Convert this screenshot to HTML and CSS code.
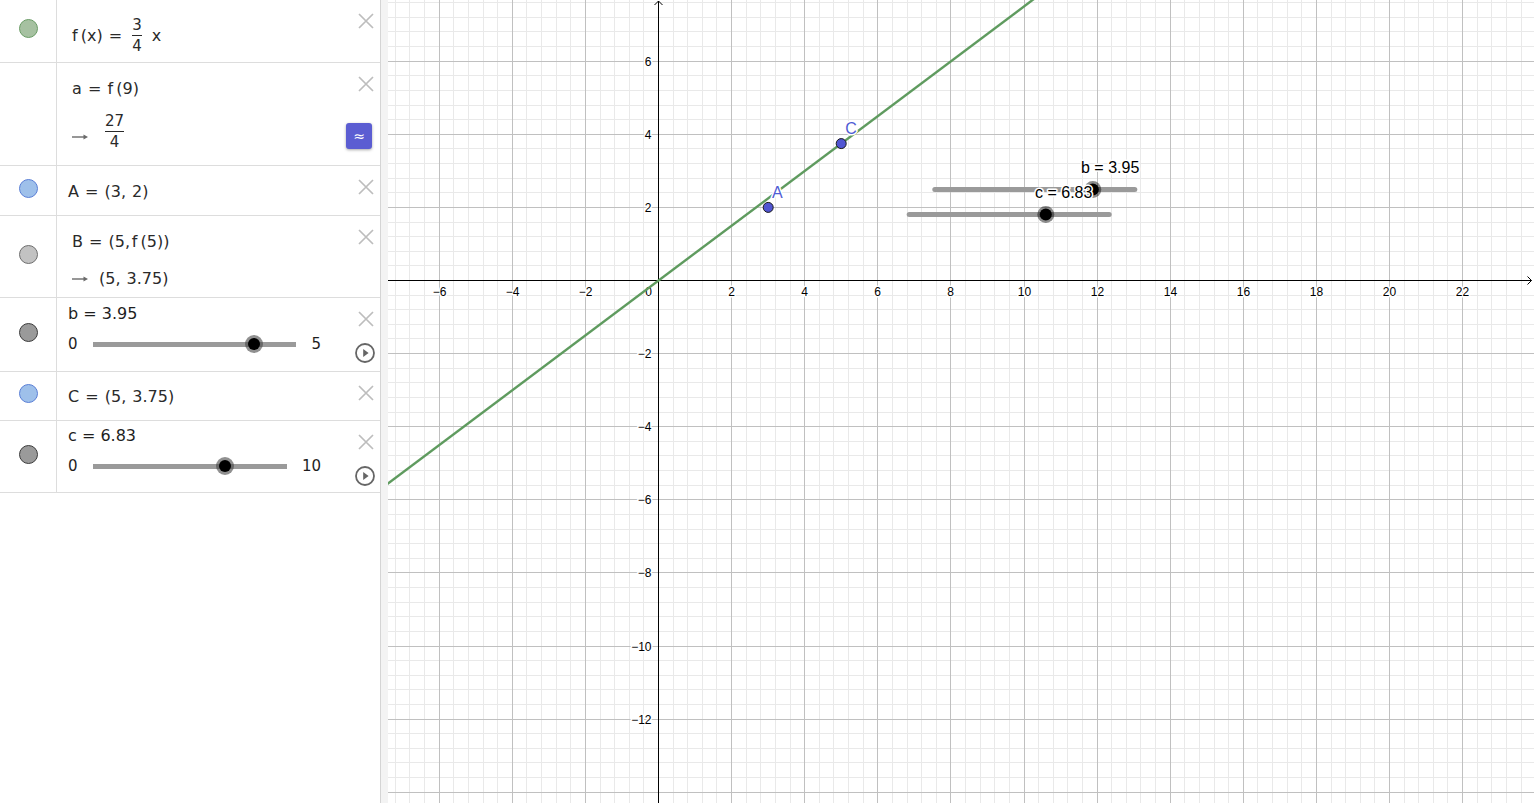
FILE: index.html
```html
<!DOCTYPE html>
<html lang="en">
<head>
<meta charset="utf-8">
<title>GeoGebra</title>
<link rel="stylesheet" href="styles.css">
</head>
<body>
<div class="app">
  <aside class="algebra">
    <div class="row r1">
      <div class="marker-col"><span class="marker m-fn"></span></div>
      <div class="content">
        <div class="mline ind">
          <span class="t">f&#8201;(x) =</span>
          <span class="frac g-frac1"><span class="num">3</span><span class="den">4</span></span>
          <span class="t g-x">x</span>
        </div>
      </div>
      <div class="controls">
        <svg class="close" viewBox="0 0 16 16"><path d="M1 1 L15 15 M15 1 L1 15"/></svg>
      </div>
    </div>

    <div class="row r2">
      <div class="marker-col"></div>
      <div class="content">
        <div class="line ind">a = f&#8201;(9)</div>
        <div class="mline ind r2l2">
          <svg class="arrow arrow-low" viewBox="0 0 16 8"><path class="shaft" d="M0 4 H13"/><path class="head" d="M11.5 1.6 L16 4 L11.5 6.4 Z"/></svg>
          <span class="frac g-frac2"><span class="num">27</span><span class="den">4</span></span>
        </div>
      </div>
      <div class="controls">
        <svg class="close" viewBox="0 0 16 16"><path d="M1 1 L15 15 M15 1 L1 15"/></svg>
        <div class="approx">&#8776;</div>
      </div>
    </div>

    <div class="row r3">
      <div class="marker-col"><span class="marker m-pt"></span></div>
      <div class="content">
        <div class="line">A = (3, 2)</div>
      </div>
      <div class="controls">
        <svg class="close" viewBox="0 0 16 16"><path d="M1 1 L15 15 M15 1 L1 15"/></svg>
      </div>
    </div>

    <div class="row r4">
      <div class="marker-col"><span class="marker m-dep"></span></div>
      <div class="content">
        <div class="line ind">B = (5,&#8202;f&#8201;(5))</div>
        <div class="line ind r4l2">
          <svg class="arrow" viewBox="0 0 16 8"><path class="shaft" d="M0 4 H13"/><path class="head" d="M11.5 1.6 L16 4 L11.5 6.4 Z"/></svg>
          <span class="t g-val">(5, 3.75)</span>
        </div>
      </div>
      <div class="controls">
        <svg class="close" viewBox="0 0 16 16"><path d="M1 1 L15 15 M15 1 L1 15"/></svg>
      </div>
    </div>

    <div class="row r5">
      <div class="marker-col"><span class="marker m-num"></span></div>
      <div class="content">
        <div class="line title">b = 3.95</div>
        <div class="slider">
          <span class="lim">0</span>
          <div class="track"><span class="knob" style="left: 79%"></span></div>
          <span class="lim">5</span>
        </div>
      </div>
      <div class="controls">
        <svg class="close" viewBox="0 0 16 16"><path d="M1 1 L15 15 M15 1 L1 15"/></svg>
        <svg class="play" viewBox="0 0 20 20"><circle cx="10" cy="10" r="9"/><path d="M8.2 6 L13.6 10 L8.2 14 Z"/></svg>
      </div>
    </div>

    <div class="row r6">
      <div class="marker-col"><span class="marker m-pt"></span></div>
      <div class="content">
        <div class="line">C = (5, 3.75)</div>
      </div>
      <div class="controls">
        <svg class="close" viewBox="0 0 16 16"><path d="M1 1 L15 15 M15 1 L1 15"/></svg>
      </div>
    </div>

    <div class="row r7">
      <div class="marker-col"><span class="marker m-num"></span></div>
      <div class="content">
        <div class="line title">c = 6.83</div>
        <div class="slider">
          <span class="lim">0</span>
          <div class="track"><span class="knob" style="left: 68.3%"></span></div>
          <span class="lim">10</span>
        </div>
      </div>
      <div class="controls">
        <svg class="close" viewBox="0 0 16 16"><path d="M1 1 L15 15 M15 1 L1 15"/></svg>
        <svg class="play" viewBox="0 0 20 20"><circle cx="10" cy="10" r="9"/><path d="M8.2 6 L13.6 10 L8.2 14 Z"/></svg>
      </div>
    </div>
  </aside>

  <div class="divider"></div>

  <main class="graphics">
    <svg class="canvas" width="1146" height="803" viewBox="0 0 1146 803">
      <g id="grid-minor" class="grid-minor"></g>
      <g id="grid-major" class="grid-major"></g>
      <g class="axes">
        <line x1="0" y1="280.5" x2="1143.5" y2="280.5"/>
        <polyline points="1139.5,276.5 1143.5,280.5 1139.5,284.5"/>
        <line x1="270.5" y1="1" x2="270.5" y2="803"/>
        <polyline points="266.5,5 270.5,1 274.5,5"/>
      </g>
      <g id="axis-labels" class="axis-labels"></g>

      <line class="fn" x1="-10" y1="490.9" x2="700" y2="-41.6"/>

      <circle class="pt" cx="380.2" cy="207.4" r="5"/>
      <text class="pt-label" x="384" y="198.3">A</text>
      <circle class="pt" cx="453.2" cy="143.6" r="5"/>
      <text class="pt-label" x="457.3" y="134">C</text>

      <line class="sl-track" x1="546.8" y1="189.5" x2="746.8" y2="189.5"/>
      <circle class="sl-ring" cx="704.8" cy="189.5" r="8.5"/>
      <circle class="sl-dot" cx="704.8" cy="189.5" r="6"/>
      <text class="sl-label" x="693" y="173.3">b = 3.95</text>

      <line class="sl-track" x1="521.2" y1="214.5" x2="721.2" y2="214.5"/>
      <circle class="sl-ring" cx="657.8" cy="214.5" r="8.5"/>
      <circle class="sl-dot" cx="657.8" cy="214.5" r="6"/>
      <text class="sl-label" x="647" y="198">c = 6.83</text>
    </svg>
  </main>
</div>
<script src="script.js"></script>
</body>
</html>
```

FILE: styles.css
```css
* { box-sizing: border-box; }
html, body { margin: 0; padding: 0; }
body {
  width: 1534px;
  height: 803px;
  overflow: hidden;
  background: #fff;
  font-family: "DejaVu Sans", "Noto Sans", sans-serif;
  color: #2a2a2a;
}
.app { display: flex; height: 803px; }

/* ---------- algebra view ---------- */
.algebra {
  width: 381px;
  flex: none;
  border-right: 1px solid #d4d4d4;
  background: #fff;
}
.divider { width: 7px; flex: none; background: #f3f3f3; }
.graphics { flex: 1; overflow: hidden; background: #fff; }
.canvas { display: block; }

.row { display: flex; border-bottom: 1px solid #dddddd; }
.r1 { height: 63px; }
.r2 { height: 103px; }
.r3 { height: 50px; }
.r4 { height: 82px; }
.r5 { height: 74px; }
.r6 { height: 49px; }
.r7 { height: 72px; }

.marker-col {
  width: 57px;
  flex: none;
  border-right: 1px solid #dddddd;
  display: flex;
  align-items: center;
  justify-content: center;
  padding-bottom: 5px;
}
.marker {
  width: 19px;
  height: 19px;
  border-radius: 50%;
  border: 1px solid;
  display: block;
}
.m-fn { background: #a6c1a1; border-color: #6a9c66; }
.m-pt { background: #9ec0ea; border-color: #5a7fd6; }
.m-dep { background: #c2c2c2; border-color: #6e6e6e; }
.m-num { background: #9a9a9a; border-color: #3c3c3c; }

.content {
  flex: 1;
  min-width: 0;
  padding-left: 11px;
  display: flex;
  flex-direction: column;
  font-size: 16px;
  word-spacing: 1px;
}
.r1 .content { padding-top: 17px; }
.r2 .content { padding-top: 16px; }
.r3 .content { padding-top: 16px; }
.r4 .content { padding-top: 16px; }
.r5 .content { padding-top: 6px; }
.r6 .content { padding-top: 15px; }
.r7 .content { padding-top: 5px; }

.line {
  height: 20px;
  line-height: 20px;
  display: flex;
  align-items: center;
  white-space: pre;
}
.mline { display: flex; align-items: center; white-space: pre; line-height: 20px; }
.ind { margin-left: 4px; }
.t { white-space: pre; }

.frac {
  display: inline-flex;
  flex-direction: column;
  text-align: center;
  font-size: 15px;
  line-height: 16px;
}
.frac .num {
  border-bottom: 1px solid #2a2a2a;
  padding-bottom: 2px;
}
.frac .den { padding-top: 2px; }
.g-frac1 { margin-left: 10px; }
.g-x { margin-left: 10px; }
.r2l2 { margin-top: 14px; }
.g-frac2 { margin-left: 17px; }
.r4l2 { margin-top: 17px; }
.g-val { margin-left: 11px; }

.arrow { width: 16px; height: 8px; flex: none; display: block; }
.arrow .shaft { stroke: #6a6a6a; stroke-width: 1.4; fill: none; }
.arrow .head { fill: #6a6a6a; }
.arrow-low { margin-top: 11px; }

.title { word-spacing: 0; color: #1e1e1e; }

.slider {
  display: flex;
  align-items: center;
  gap: 15px;
  width: 253px;
  height: 20px;
  margin-top: 10px;
  font-size: 15px;
  color: #1e1e1e;
}
.lim { line-height: 20px; }
.track {
  flex: 1;
  height: 5px;
  background: #9a9a9a;
  position: relative;
}
.knob {
  position: absolute;
  top: 50%;
  width: 12px;
  height: 12px;
  margin: -6px 0 0 -6px;
  border-radius: 50%;
  background: #000;
  box-shadow: 0 0 0 3px rgba(70, 70, 70, 0.6);
}

.controls {
  width: 36px;
  flex: none;
  display: flex;
  flex-direction: column;
  align-items: flex-end;
  padding-top: 13px;
}
.close {
  width: 16px;
  height: 16px;
  margin-right: 6px;
  display: block;
  flex: none;
}
.close path { stroke: #bdbdbd; stroke-width: 1.7; fill: none; }
.approx {
  width: 26px;
  height: 26px;
  margin-top: 31px;
  margin-right: 8px;
  border-radius: 3px;
  background: #5b5dd2;
  box-shadow: 0 1px 3px rgba(0, 0, 0, 0.35);
  color: #fff;
  font-size: 14px;
  line-height: 26px;
  text-align: center;
}
.play {
  width: 20px;
  height: 20px;
  margin-top: 16px;
  margin-right: 5px;
  display: block;
  flex: none;
}
.play circle { fill: #fff; stroke: #666; stroke-width: 1.8; }
.play path { fill: #666; }

/* ---------- graphics view ---------- */
.grid-minor line { stroke: #e9e9e9; stroke-width: 1; }
.grid-major line { stroke: #c0c0c0; stroke-width: 1; }
.axes line, .axes polyline { stroke: #000; stroke-width: 1; fill: none; }
.axis-labels text {
  font-family: "Liberation Sans", Arial, sans-serif;
  font-size: 12px;
  fill: #000;
  stroke: #fff;
  stroke-width: 3px;
  stroke-linejoin: round;
  paint-order: stroke;
}
.fn { stroke: #5f9b5f; stroke-width: 2.4; }
.pt { fill: #5055d2; stroke: #1a1a1a; stroke-width: 1; }
.pt-label {
  font-family: "Liberation Sans", Arial, sans-serif;
  font-size: 16px;
  fill: #4f5cd4;
  stroke: #fff;
  stroke-width: 3px;
  stroke-linejoin: round;
  paint-order: stroke;
}
.sl-track { stroke: #9a9a9a; stroke-width: 5; stroke-linecap: round; }
.sl-ring { fill: rgba(0, 0, 0, 0.45); }
.sl-dot { fill: #000; }
.sl-label {
  font-family: "Liberation Sans", Arial, sans-serif;
  font-size: 16px;
  fill: #000;
  stroke: #fff;
  stroke-width: 3px;
  stroke-linejoin: round;
  paint-order: stroke;
}
```

FILE: script.js
```js
(function () {
  var NS = 'http://www.w3.org/2000/svg';
  var OX = 270, OY = 280, STEP = 14.62, W = 1146, H = 803;
  var minor = document.getElementById('grid-minor');
  var major = document.getElementById('grid-major');
  var labels = document.getElementById('axis-labels');

  function pos(o, k) { return Math.round(o + k * STEP) + 0.5; }
  function mk(tag, attrs, parent) {
    var e = document.createElementNS(NS, tag);
    for (var a in attrs) e.setAttribute(a, attrs[a]);
    parent.appendChild(e);
    return e;
  }
  function label(txt, x, y, anchor) {
    var t = mk('text', { x: x, y: y, 'text-anchor': anchor }, labels);
    t.textContent = txt;
  }
  function fmt(n) { return (n < 0 ? '\u2212' : '') + Math.abs(n); }

  var k, p, n;
  for (k = -18; k <= 59; k++) {
    if (k === 0) continue;
    p = pos(OX, k);
    mk('line', { x1: p, y1: 0, x2: p, y2: H }, k % 5 === 0 ? major : minor);
  }
  for (k = -19; k <= 35; k++) {
    if (k === 0) continue;
    p = pos(OY, k);
    mk('line', { x1: 0, y1: p, x2: W, y2: p }, k % 5 === 0 ? major : minor);
  }
  for (n = -6; n <= 22; n += 2) {
    if (n === 0) continue;
    label(fmt(n), pos(OX, n * 2.5), 296, 'middle');
  }
  for (n = -12; n <= 6; n += 2) {
    if (n === 0) continue;
    label(fmt(n), 263.5, pos(OY, -n * 2.5) + 4.5, 'end');
  }
  label('0', 264, 296, 'end');
})();
```
